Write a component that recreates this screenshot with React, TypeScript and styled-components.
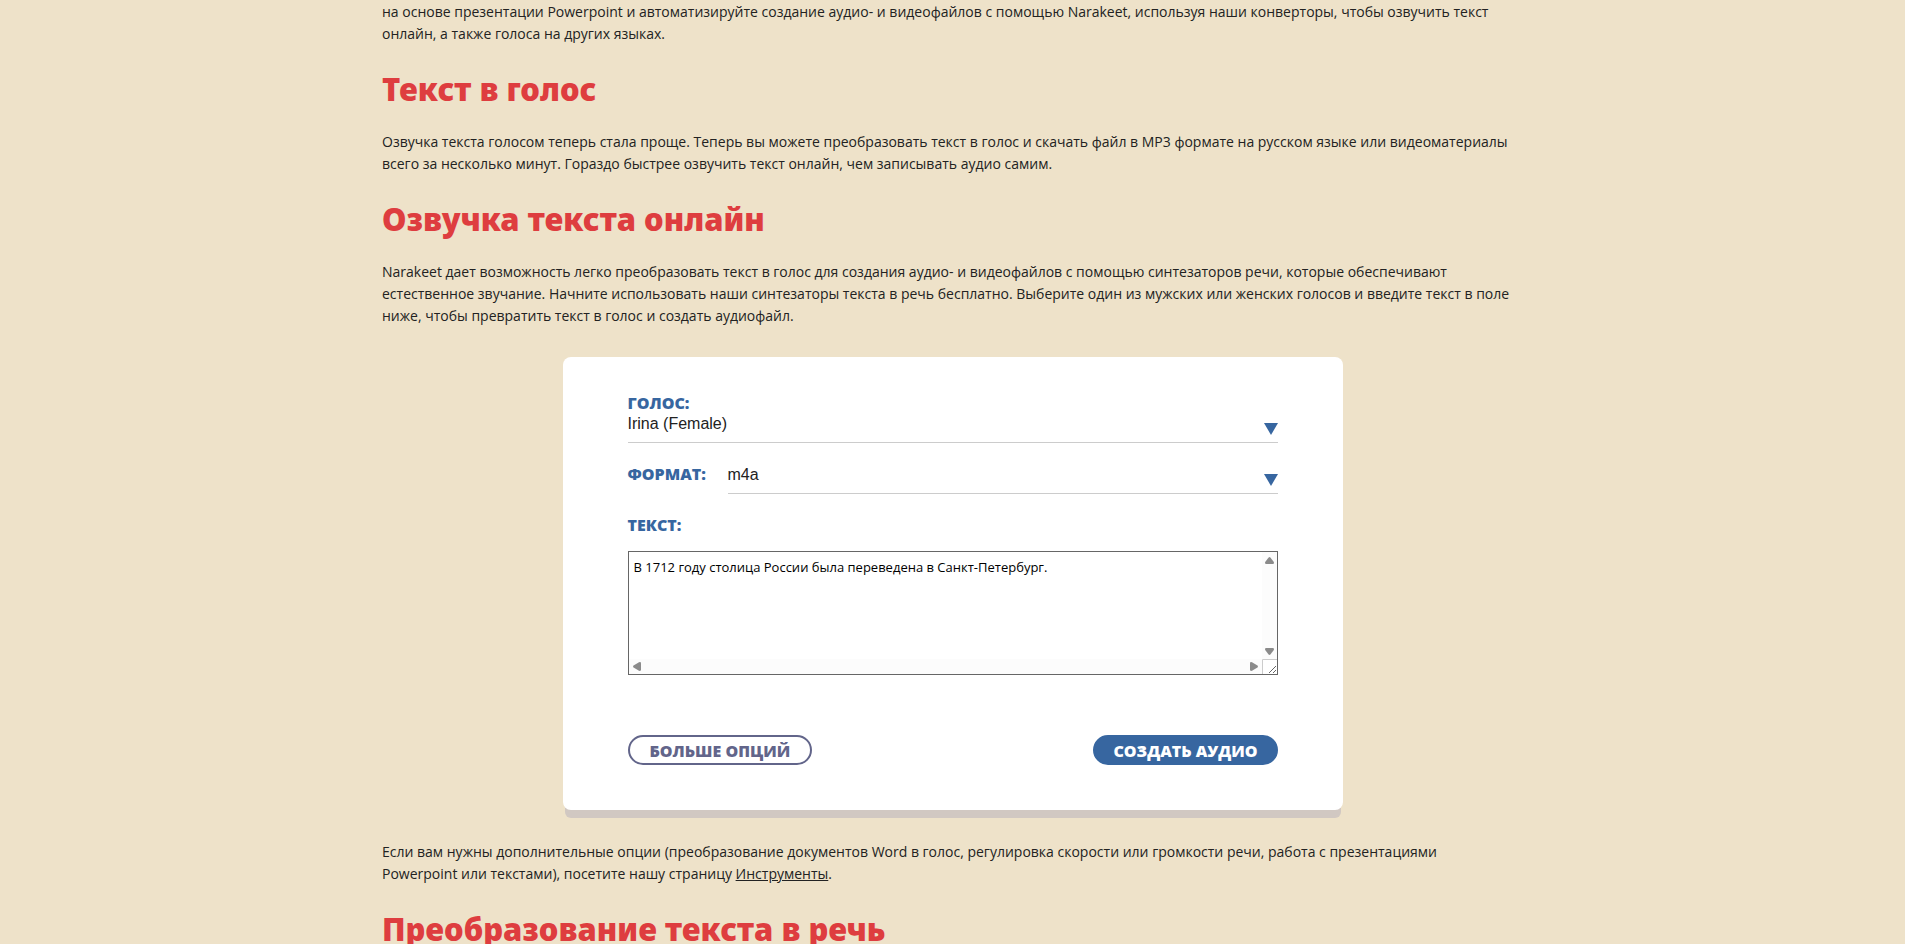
import React, { useState } from 'react';
import styled, { createGlobalStyle } from 'styled-components';

const sand = '#eee2c9';
const red = '#de3d3f';
const blue = '#3766a0';
const slate = '#62658a';

const GlobalStyle = createGlobalStyle`
  *, *::before, *::after { box-sizing: border-box; }
  body {
    margin: 0;
    background: ${sand};
    color: #222;
    font-family: "Open Sans", "Noto Sans", sans-serif;
    font-size: 14px;
    line-height: 22px;
  }
`;

const Article = styled.main`
  width: 60%;
  min-width: 320px;
  margin: 0 auto;
  padding: 1px 1px 0;
`;

const Paragraph = styled.p`
  margin: 0;
`;

const Heading = styled.h2`
  margin: 23px 0 21px;
  color: ${red};
  font-family: "Noto Sans", sans-serif;
  font-size: 31px;
  font-weight: 900;
  line-height: 42px;
`;

const TextLink = styled.a`
  color: inherit;
  text-decoration: underline;
`;

const Card = styled.form`
  max-width: 780px;
  margin: 30px auto 31px;
  padding: 36px 65px 45px;
  border-radius: 8px;
  background: #fff;
  box-shadow: 0 10px 0 -2px #d1c8c2;
`;

const Field = styled.div<{ $inline?: boolean }>`
  display: grid;
  grid-template-columns: ${p => (p.$inline ? '100px 1fr' : '1fr')};
  margin-bottom: 21px;
`;

const Label = styled.label`
  color: ${blue};
  font-family: "Open Sans", sans-serif;
  font-size: 16px;
  font-weight: 900;
  line-height: 20px;
  text-transform: uppercase;
`;

const SelectBox = styled.div`
  position: relative;
  display: grid;
`;

const Select = styled.select`
  appearance: none;
  width: 100%;
  height: 30px;
  margin: 0;
  padding: 2px 20px 9px 0;
  border: 0;
  border-bottom: 1px solid #ccc;
  border-radius: 0;
  background: transparent;
  color: #222;
  font-family: "Liberation Sans", Arial, sans-serif;
  font-size: 16px;
  line-height: 18px;
`;

const SelectArrow = styled.svg`
  position: absolute;
  top: 10px;
  right: 0;
  width: 14px;
  height: 12px;
  fill: ${blue};
  pointer-events: none;
`;

const EditorBox = styled.div`
  position: relative;
  display: grid;
  margin-top: 16px;
`;

const Editor = styled.textarea`
  width: 100%;
  height: 124px;
  margin: 0;
  padding: 6px 20px 20px 5px;
  border: 1px solid #666;
  border-radius: 0;
  background: #fff;
  color: #000;
  font-family: "Open Sans", sans-serif;
  font-size: 13px;
  line-height: 18px;
  resize: none;
  overflow: hidden;
  white-space: pre;
`;

const ScrollBar = styled.div<{ $vertical?: boolean }>`
  position: absolute;
  right: ${p => (p.$vertical ? '1px' : '16px')};
  bottom: ${p => (p.$vertical ? '16px' : '1px')};
  ${p => (p.$vertical ? 'top: 1px; width: 15px;' : 'left: 1px; height: 15px;')}
  display: flex;
  flex-direction: ${p => (p.$vertical ? 'column' : 'row')};
  align-items: center;
  justify-content: space-between;
  padding: ${p => (p.$vertical ? '5px 0 4px' : '0 4px')};
  background: #fcfcfc;

  svg { display: block; fill: #8b8b8b; }
`;

const Grip = styled.svg`
  position: absolute;
  right: 1px;
  bottom: 1px;
  width: 15px;
  height: 15px;
  background: #fff;
`;

const Actions = styled.div`
  display: flex;
  justify-content: space-between;
  margin-top: 60px;
`;

const Button = styled.button<{ $primary?: boolean }>`
  height: 30px;
  padding: 2px ${p => (p.$primary ? '18px' : '20px')} 0;
  border: 2px solid ${p => (p.$primary ? blue : slate)};
  border-radius: 15px;
  background: ${p => (p.$primary ? blue : '#fff')};
  color: ${p => (p.$primary ? '#fff' : slate)};
  font-family: "Open Sans", sans-serif;
  font-size: 16px;
  font-weight: 900;
  line-height: 24px;
  text-transform: uppercase;
  cursor: pointer;
`;

function Dropdown({ id, options }: { id: string; options: string[] }) {
  return (
    <SelectBox>
      <Select id={id}>
        {options.map(option => <option key={option}>{option}</option>)}
      </Select>
      <SelectArrow viewBox="0 0 14 12" aria-hidden="true"><path d="M0 0H14L7 12Z" /></SelectArrow>
    </SelectBox>
  );
}

function TextEditor({ id }: { id: string }) {
  const [text, setText] = useState('В 1712 году столица России была переведена в Санкт-Петербург.');
  return (
    <EditorBox>
      <Editor id={id} value={text} spellCheck={false} onChange={e => setText(e.target.value)} />
      <ScrollBar $vertical aria-hidden="true">
        <svg width="9" height="7" viewBox="0 0 9 7"><path d="M3.6 .5Q4.5-.4 5.4 .5L8.8 5Q9.4 7 7.8 7H1.2Q-.4 7 .2 5Z" /></svg>
        <svg width="9" height="7" viewBox="0 0 9 7"><path d="M3.6 6.5Q4.5 7.4 5.4 6.5L8.8 2Q9.4 0 7.8 0H1.2Q-.4 0 .2 2Z" /></svg>
      </ScrollBar>
      <ScrollBar aria-hidden="true">
        <svg width="8" height="9" viewBox="0 0 8 9"><path d="M.5 3.6Q-.4 4.5 .5 5.4L6 8.8Q8 9.4 8 7.8V1.2Q8-.4 6 .2Z" /></svg>
        <svg width="8" height="9" viewBox="0 0 8 9"><path d="M7.5 3.6Q8.4 4.5 7.5 5.4L2 8.8Q0 9.4 0 7.8V1.2Q0-.4 2 .2Z" /></svg>
      </ScrollBar>
      <Grip viewBox="0 0 15 15" fill="none" aria-hidden="true">
        <path d="M.5 15V.5H15" stroke="#ccc" />
        <path d="M7 14L14 7M11 14L14 11" stroke="#666" />
      </Grip>
    </EditorBox>
  );
}

export default function App() {
  return (
    <>
      <GlobalStyle />
      <Article>
        <Paragraph>
          на основе презентации Powerpoint и автоматизируйте создание аудио- и видеофайлов с помощью Narakeet, используя наши конверторы, чтобы озвучить текст онлайн, а также голоса на других языках.
        </Paragraph>

        <Heading>Текст в голос</Heading>
        <Paragraph>
          Озвучка текста голосом теперь стала проще. Теперь вы можете преобразовать текст в голос и скачать файл в MP3 формате на русском языке или видеоматериалы всего за несколько минут. Гораздо быстрее озвучить текст онлайн, чем записывать аудио самим.
        </Paragraph>

        <Heading>Озвучка текста онлайн</Heading>
        <Paragraph>
          Narakeet дает возможность легко преобразовать текст в голос для создания аудио- и видеофайлов с помощью синтезаторов речи, которые обеспечивают естественное звучание. Начните использовать наши синтезаторы текста в речь бесплатно. Выберите один из мужских или женских голосов и введите текст в поле ниже, чтобы превратить текст в голос и создать аудиофайл.
        </Paragraph>

        <Card onSubmit={e => e.preventDefault()}>
          <Field>
            <Label htmlFor="voice">Голос:</Label>
            <Dropdown id="voice" options={['Irina (Female)']} />
          </Field>
          <Field $inline>
            <Label htmlFor="format">Формат:</Label>
            <Dropdown id="format" options={['m4a', 'mp3', 'wav']} />
          </Field>
          <Field>
            <Label htmlFor="text">Текст:</Label>
            <TextEditor id="text" />
          </Field>
          <Actions>
            <Button type="button">Больше опций</Button>
            <Button type="submit" $primary>Создать аудио</Button>
          </Actions>
        </Card>

        <Paragraph>
          Если вам нужны дополнительные опции (преобразование документов Word в голос, регулировка скорости или громкости речи, работа с презентациями Powerpoint&nbsp;или текстами), посетите нашу страницу <TextLink href="#tools">Инструменты</TextLink>.
        </Paragraph>

        <Heading>Преобразование текста в речь</Heading>
      </Article>
    </>
  );
}
